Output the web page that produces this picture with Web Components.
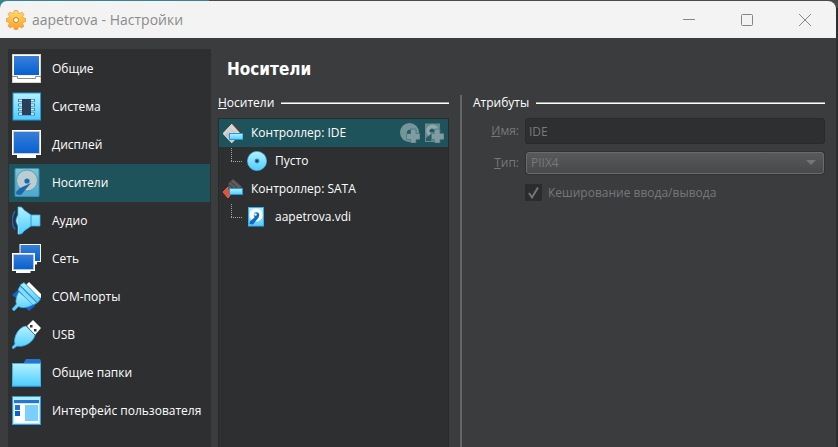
<!DOCTYPE html>
<html lang="ru">
<head>
<meta charset="utf-8">
<title>aapetrova - Настройки</title>
<style>
html { background: #2c2e30; }
body { margin: 0; overflow: hidden; font: 12px/16px "Open Sans", "Noto Sans", sans-serif; color: #fff; }
</style>
</head>
<body>
<app-window>
  <title-bar slot="title">aapetrova - Настройки</title-bar>
  <side-nav slot="nav">
    <nav-item icon="general">Общие</nav-item>
    <nav-item icon="system">Система</nav-item>
    <nav-item icon="display">Дисплей</nav-item>
    <nav-item icon="storage" selected>Носители</nav-item>
    <nav-item icon="audio">Аудио</nav-item>
    <nav-item icon="network">Сеть</nav-item>
    <nav-item icon="serial">COM-порты</nav-item>
    <nav-item icon="usb">USB</nav-item>
    <nav-item icon="folder">Общие папки</nav-item>
    <nav-item icon="interface">Интерфейс пользователя</nav-item>
  </side-nav>
  <span slot="heading">Носители</span>
  <storage-tree slot="tree">
    <tree-row icon="ide" selected>Контроллер: IDE</tree-row>
    <tree-row icon="disc" child>Пусто</tree-row>
    <tree-row icon="sata">Контроллер: SATA</tree-row>
    <tree-row icon="disk" child>aapetrova.vdi</tree-row>
  </storage-tree>
  <attribute-form slot="attributes"></attribute-form>
</app-window>

<script>
const defs = `<defs>
  <linearGradient id="scr" x1="0" y1="0" x2="0" y2="1"><stop offset="0" stop-color="#3a7fd8"/><stop offset="1" stop-color="#0560d2"/></linearGradient>
  <linearGradient id="sky" x1="0" y1="0" x2="0" y2="1"><stop offset="0" stop-color="#b4f1ff"/><stop offset="1" stop-color="#4fcdff"/></linearGradient>
  <linearGradient id="dim" x1="0" y1="0" x2="0" y2="1"><stop offset="0" stop-color="#7fc4d4"/><stop offset="1" stop-color="#49a9cd"/></linearGradient>
  <linearGradient id="gold" x1="0" y1="0" x2="0" y2="1"><stop offset="0" stop-color="#ffdd6c"/><stop offset="1" stop-color="#f9a01f"/></linearGradient>
</defs>`;

const icons = {
  general: [29, `<rect width="29" height="29" fill="#fff"/><rect x=".5" y=".5" width="28" height="28" fill="none" stroke="#d8d4cf"/><rect x="2" y="2" width="25" height="19" fill="url(#scr)"/><path d="M0 22.500H5.500V24.500H23.500V22.500H29" fill="none" stroke="#8d8d8d"/><path d="M1 21.500H28" stroke="#f4f1ec"/>`],
  system: [29, `<rect x="1" y="1" width="27.500" height="27" fill="url(#sky)" stroke="#2797e2"/><g stroke="#3b87b5" stroke-width="3"><path d="M6 8.500H23M6 13H23M6 17.500H23M6 22H23"/></g><g stroke="#dff8ff" stroke-width="1.400"><path d="M7 8.500H22M7 13H22M7 17.500H22M7 22H22"/></g><rect x="10" y="7" width="9" height="16" fill="#2b3f58"/>`],
  display: [29, `<rect x=".5" y=".5" width="28" height="24" fill="url(#scr)" stroke="#fff" stroke-width="1"/><rect x="1.500" y="1.500" width="26" height="22" fill="none" stroke="#d2cdc8"/><rect x="5" y="25" width="19" height="3" fill="#fff"/>`],
  storage: [29, `<rect x="3" y=".5" width="24" height="28" rx="1" fill="url(#dim)" stroke="#398fc0"/><circle cx="15" cy="12.500" r="10.500" fill="#b9cdd3" stroke="#5095a5" stroke-width=".8"/><path d="M19 15 9 27 4.500 26.500 4 24 8 20Z" fill="#1f68a8"/><circle cx="15" cy="13" r="2.600" fill="#1f68a8"/>`],
  audio: [29, `<path d="M3 5Q-2.500 14.500 3 23.500M6 9Q2 14.500 6 20" fill="none" stroke="#1a68bb" stroke-width="1.500"/><path d="M6 1Q10 0 12 4L19 9H28V20H19L12 25Q10 29 6 28Z" fill="url(#sky)" stroke="#3ab1ee" stroke-width=".8"/><path d="M19 9V20" stroke="#2e9bdb"/><path d="M6.500 1V28" stroke="#79dfff"/><path d="M6 9.500Q2.500 14.500 6 19.500Z" fill="#a9eeff"/>`],
  network: [29, `<rect x="8" y=".500" width="20.500" height="17" fill="url(#scr)" stroke="#fff"/><rect x="22" y="18" width="3" height="2.500" fill="#fff"/><rect x="0" y="9" width="23" height="18" fill="#fff"/><rect x="1.500" y="10.500" width="20" height="15" fill="url(#scr)" stroke="#d6d2cc" stroke-width=".6"/><rect x="4" y="26" width="14.500" height="3" fill="#fff"/>`],
  serial: [29, `<path d="M14 3 17 0 29 12 29 16 26 15Z" fill="#fff"/><path d="M0 13 6 8 9 11 4 16Z M14 26 20 20 23 24 17 29Z" fill="#1763c8"/><path d="M7 10C5 13 3 19 4.500 22L0 27 2 29 6.500 24.500C11 27 18 25 21 22Z" fill="url(#sky)" stroke="#37aee9" stroke-width=".8"/><path d="M8 3 12 .5 28.500 17 25.500 21Z" fill="url(#sky)" stroke="#2796dd" stroke-width=".9"/><path d="M8 4 25 21 21 23 6 8Z" fill="#7fdcfd" stroke="#37a0dd" stroke-width=".8"/>`],
  usb: [29, `<path d="M15 6 21 0 29 8 23 15Z" fill="#fff"/><path d="M14 6 23 15C22 21 13 28 5 26L1 29 0 27 3 24C1 18 6 7 14 6Z" fill="url(#sky)" stroke="#35aaea" stroke-width=".8"/><path d="M14 6 23 15" stroke="#2a79b7"/><rect x="18" y="5" width="2.500" height="2.500" fill="#333"/><rect x="22" y="9" width="2.500" height="2.500" fill="#333"/>`],
  folder: [29, `<path d="M11 6 14 1H28L29 3V8H11Z" fill="#2c73cf"/><rect x=".5" y="5.500" width="28" height="22.500" fill="url(#sky)" stroke="#3db5f1"/><path d="M0 28.500H29" stroke="#2790df"/>`],
  interface: [29, `<rect x=".5" y=".5" width="28" height="28" fill="#fff" stroke="#2e9ff0"/><rect x="1" y="1" width="27" height="7" fill="#b2edfd"/><rect x="2" y="4" width="25" height="3" fill="#2e73cf"/><path d="M1.500 8V27.500H27.500V8" fill="none" stroke="#a5e9ff"/><rect x="3" y="9" width="5" height="5" fill="#236fd2"/><rect x="3" y="15" width="5" height="5" fill="#0860d4"/><rect x="13" y="9" width="13" height="16" fill="#7bcffd"/>`],
  ide: [20, `<path d="M10 0 20 9 16 11 6 4Z" fill="#444"/><path d="M9 1 0 10.500 9 20 14 15 17 10Z" fill="#d9d5d2"/><path d="M9 1 0 10.500 9 20" fill="none" stroke="#f6efe9" stroke-width=".8"/><path d="M6 5 13 11M4 7 10 13M3 9 9 15" stroke="#bdb9b7" stroke-width=".7"/><path d="M2 11.500 9 19 10 15 5 10Z" fill="#c8baba"/><rect x="6.500" y="10.500" width="13.500" height="6" fill="url(#sky)" stroke="#2796de"/>`],
  sata: [20, `<path d="M10 0 19 8 16 10H6L5 5Z" fill="#5c5c5c"/><path d="M5 5 11 10M8 3 15 10" fill="none" stroke="#3a3a3a"/><path d="M0 13 5 8V11L9 14 5 19Z" fill="#ed4f2d" stroke="#f58b6a" stroke-width=".6"/><rect x="6.500" y="9.500" width="13" height="6" fill="url(#sky)" stroke="#2796de"/>`],
  disc: [20, `<circle cx="10" cy="10" r="9.600" fill="url(#sky)" stroke="#37b7ee" stroke-width=".7"/><circle cx="10" cy="10" r="2" fill="#17436b" stroke="#388dba"/>`],
  disk: [20, `<rect x="1.500" y=".5" width="15" height="18.500" fill="url(#sky)" stroke="#38aeee"/><circle cx="9" cy="8" r="6.600" fill="#f5fbff"/><path d="M12 10 6 17.500 2.500 17 3 14.500 8 10Z" fill="#1668bf"/><circle cx="9.500" cy="8" r="2.700" fill="#1668bf"/><circle cx="8.500" cy="7.500" r="1.300" fill="#f5fbff"/>`],
  addDisc: [20, `<circle cx="9.500" cy="9.500" r="9.500" fill="#769599"/><circle cx="9.500" cy="9.500" r="2.500" fill="#255a62"/><path d="M10.500 6H16V10.500H20V16.500H16V20H10.500V16.500H6.500V10.500H10.500Z" fill="#7f9da1" stroke="#4d747b" stroke-width=".8"/><path d="M7 10.500V8.500L10.500 6V10.500Z" fill="#255a62"/>`],
  addDisk: [20, `<rect x="1" y=".5" width="15" height="18.500" fill="#668a90"/><circle cx="8.500" cy="8" r="6.500" fill="#91a8ab"/><path d="M8 10 2 15V18H7L9 14Z" fill="#285b64"/><path d="M6 9.500A2.500 2.500 0 1 1 10 9.500Z" fill="#255a62"/><path d="M10.500 6H16V10.500H20V16.500H16V20H10.500V16.500H7.500V10.500H10.500Z" fill="#7f9da1" stroke="#4d747b" stroke-width=".8"/>`],
  gear: [20, `<g fill="url(#gold)" stroke="#e69a4a" stroke-width=".8" stroke-linejoin="round"><path d="M8.300.5H11.700L12.300 3 14 3.700 16 2.200 18 4.300 16.600 6.300 17.200 7.800 19.500 8.300V11.700L17.200 12.200 16.500 13.800 18 15.900 15.800 18 13.800 16.600 12.200 17.200 11.700 19.500H8.300L7.800 17.200 6.200 16.600 4.200 18 2 15.800 3.400 13.800 2.800 12.200.5 11.700V8.300L2.800 7.800 3.500 6.200 2 4.200 4.200 2 6.200 3.500 7.800 2.900Z"/></g><circle cx="10" cy="10" r="2.500" fill="#fff5e1" stroke="#bd8448"/>`]
};
const svg = (name) => `<svg width="${icons[name][0]}" height="${icons[name][0]}" viewBox="0 0 ${icons[name][0]} ${icons[name][0]}" aria-hidden="true">${defs}${icons[name][1]}</svg>`;

const base = `<style>*{box-sizing:border-box} svg{display:block;flex:none} button{font:inherit;color:inherit;background:none;border:0;padding:0;margin:0}</style>`;
function define(name, render) {
  customElements.define(name, class extends HTMLElement {
    constructor() { super(); this.attachShadow({ mode: 'open' }); }
    connectedCallback() { this.shadowRoot.innerHTML = base + render(this); }
  });
}

define('app-window', () => `<style>
  :host{display:flex;flex-direction:column;min-height:100vh;padding:1px 2px 0 0;background:linear-gradient(90deg,#358493 25%,#4a494c 25%) top/100% 8px no-repeat,#2c2e30}
  .body{flex:1;display:grid;grid-template-columns:203px 1fr;column-gap:7px;padding:11px 11px 0 8px;background:#3b3c3e}
  main{display:flex;flex-direction:column;min-width:0}
  h1{margin:10px 0 16px 9px;font:bold 17px/20px "DejaVu Sans Condensed","DejaVu Sans",sans-serif}
  .panes{flex:1;display:grid;grid-template-columns:231px 2px 1fr;column-gap:11px}
  .split{background:#646567}
  </style><slot name="title"></slot>
  <div class="body"><slot name="nav"></slot><main><h1><slot name="heading"></slot></h1>
  <div class="panes"><slot name="tree"></slot><div class="split"></div><slot name="attributes"></slot></div></main></div>`);

define('title-bar', () => `<style>
  :host{display:flex;align-items:center;height:37px;padding:0 2px 0 6px;background:#f3f3f3;border-radius:7px 8px 0 0;color:#8b8b8b;font-size:14px;line-height:20px}
  .name{flex:1;margin-left:6px}
  button{width:58px;height:36px;display:grid;place-items:center}
  </style>${svg('gear')}<span class="name"><slot></slot></span>
  <button aria-label="Свернуть"><svg width="12" height="12"><path d="M0 5.500H12" stroke="#858585"/></svg></button>
  <button aria-label="Развернуть"><svg width="12" height="12"><rect x=".5" y=".5" width="11" height="11" rx="1" fill="none" stroke="#858585"/></svg></button>
  <button aria-label="Закрыть"><svg width="12" height="12"><path d="M0 0 12 12M12 0 0 12" stroke="#858585"/></svg></button>`);

define('side-nav', () => `<style>:host{display:block;background:#2e2f31;padding:1px}</style><nav><slot></slot></nav>`);

define('nav-item', (el) => `<style>
  :host{display:block} :host([selected]){background:#1f535b}
  button{display:flex;align-items:center;gap:11px;width:100%;height:38px;padding:0 3px;text-align:left;white-space:nowrap}
  svg{align-self:start;margin-top:4px}
  </style><button>${svg(el.getAttribute('icon'))}<span><slot></slot></span></button>`);

define('group-title', () => `<style>
  :host{display:flex;align-items:center;gap:7px;height:16px}
  i{flex:1;height:2px;background:linear-gradient(#a5a5a6 50%,#fff 50%)}
  </style><span><slot></slot></span><i></i>`);

define('storage-tree', () => `<style>
  :host{display:flex;flex-direction:column;gap:7px}
  .list{flex:1;background:#2e2f31;border:1px solid #292a2c;border-bottom:0}
  </style><group-title><u>Н</u>осители</group-title><div class="list" role="tree"><slot></slot></div>`);

define('tree-row', (el) => `<style>
  :host{display:flex;align-items:center;height:28px;padding:0 4px;gap:8px} :host([selected]){background:#1f535b}
  .line{margin:0 -4px 0 8px;align-self:start}
  .name{flex:1} .tools{display:flex;gap:4px}
  </style>${el.hasAttribute('child') ? `<svg class="line" width="12" height="15"><path d="M.5 1V14M0 14.500H12" fill="none" stroke="#a4a5a6" stroke-dasharray="1 1"/></svg>` : ''}
  ${svg(el.getAttribute('icon'))}<span class="name"><slot></slot></span>
  ${el.hasAttribute('selected') ? `<span class="tools"><button aria-label="Добавить оптический привод">${svg('addDisc')}</button><button aria-label="Добавить жёсткий диск">${svg('addDisk')}</button></span>` : ''}`);

define('attribute-form', () => `<style>
  :host{display:block;min-width:0}
  form{display:grid;grid-template-columns:46px 1fr;column-gap:6px;row-gap:7px;margin-top:7px;color:#777879;align-items:center}
  form>label{text-align:right}
  input[type=text]{width:100%;height:26px;padding:0 3px;border:1px solid #292a2c;border-radius:3px;background:#2e2f31;color:#777879;font:inherit}
  .combo{display:grid;align-items:center;height:24px;padding:0 1px}
  select{grid-area:1/1;appearance:none;width:100%;height:22px;padding:0 4px;border:1px solid #6a6b6c;border-radius:3px;box-shadow:0 0 0 1px #303133;font:inherit;color:#777879;opacity:1;background:linear-gradient(#58595a,#48494a)}
  .combo svg{grid-area:1/1;justify-self:end;margin-right:8px;pointer-events:none}
  .check{grid-column:2;display:flex;align-items:center;gap:6px;margin-top:2px}
  .box{display:grid} .box>*{grid-area:1/1} .box svg{pointer-events:none;z-index:1}
  .box input{appearance:none;margin:0;width:17px;height:17px;background:#2b2c2e}
  </style><group-title>Атрибуты</group-title>
  <form><label for="name"><u>И</u>мя:</label><input id="name" type="text" value="IDE" disabled>
  <label for="type"><u>Т</u>ип:</label><div class="combo"><select id="type" disabled><option>PIIX4</option></select><svg width="10" height="6"><path d="M0 0H10L5 5Z" fill="#747576"/></svg></div>
  <div class="check"><span class="box"><input id="cache" type="checkbox" checked disabled><svg width="17" height="17"><path d="M4 9 7 13.500 13 3.500" fill="none" stroke="#747576" stroke-width="2"/></svg></span><label for="cache">Кеширование ввода/вывода</label></div></form>`);
</script>
</body>
</html>
